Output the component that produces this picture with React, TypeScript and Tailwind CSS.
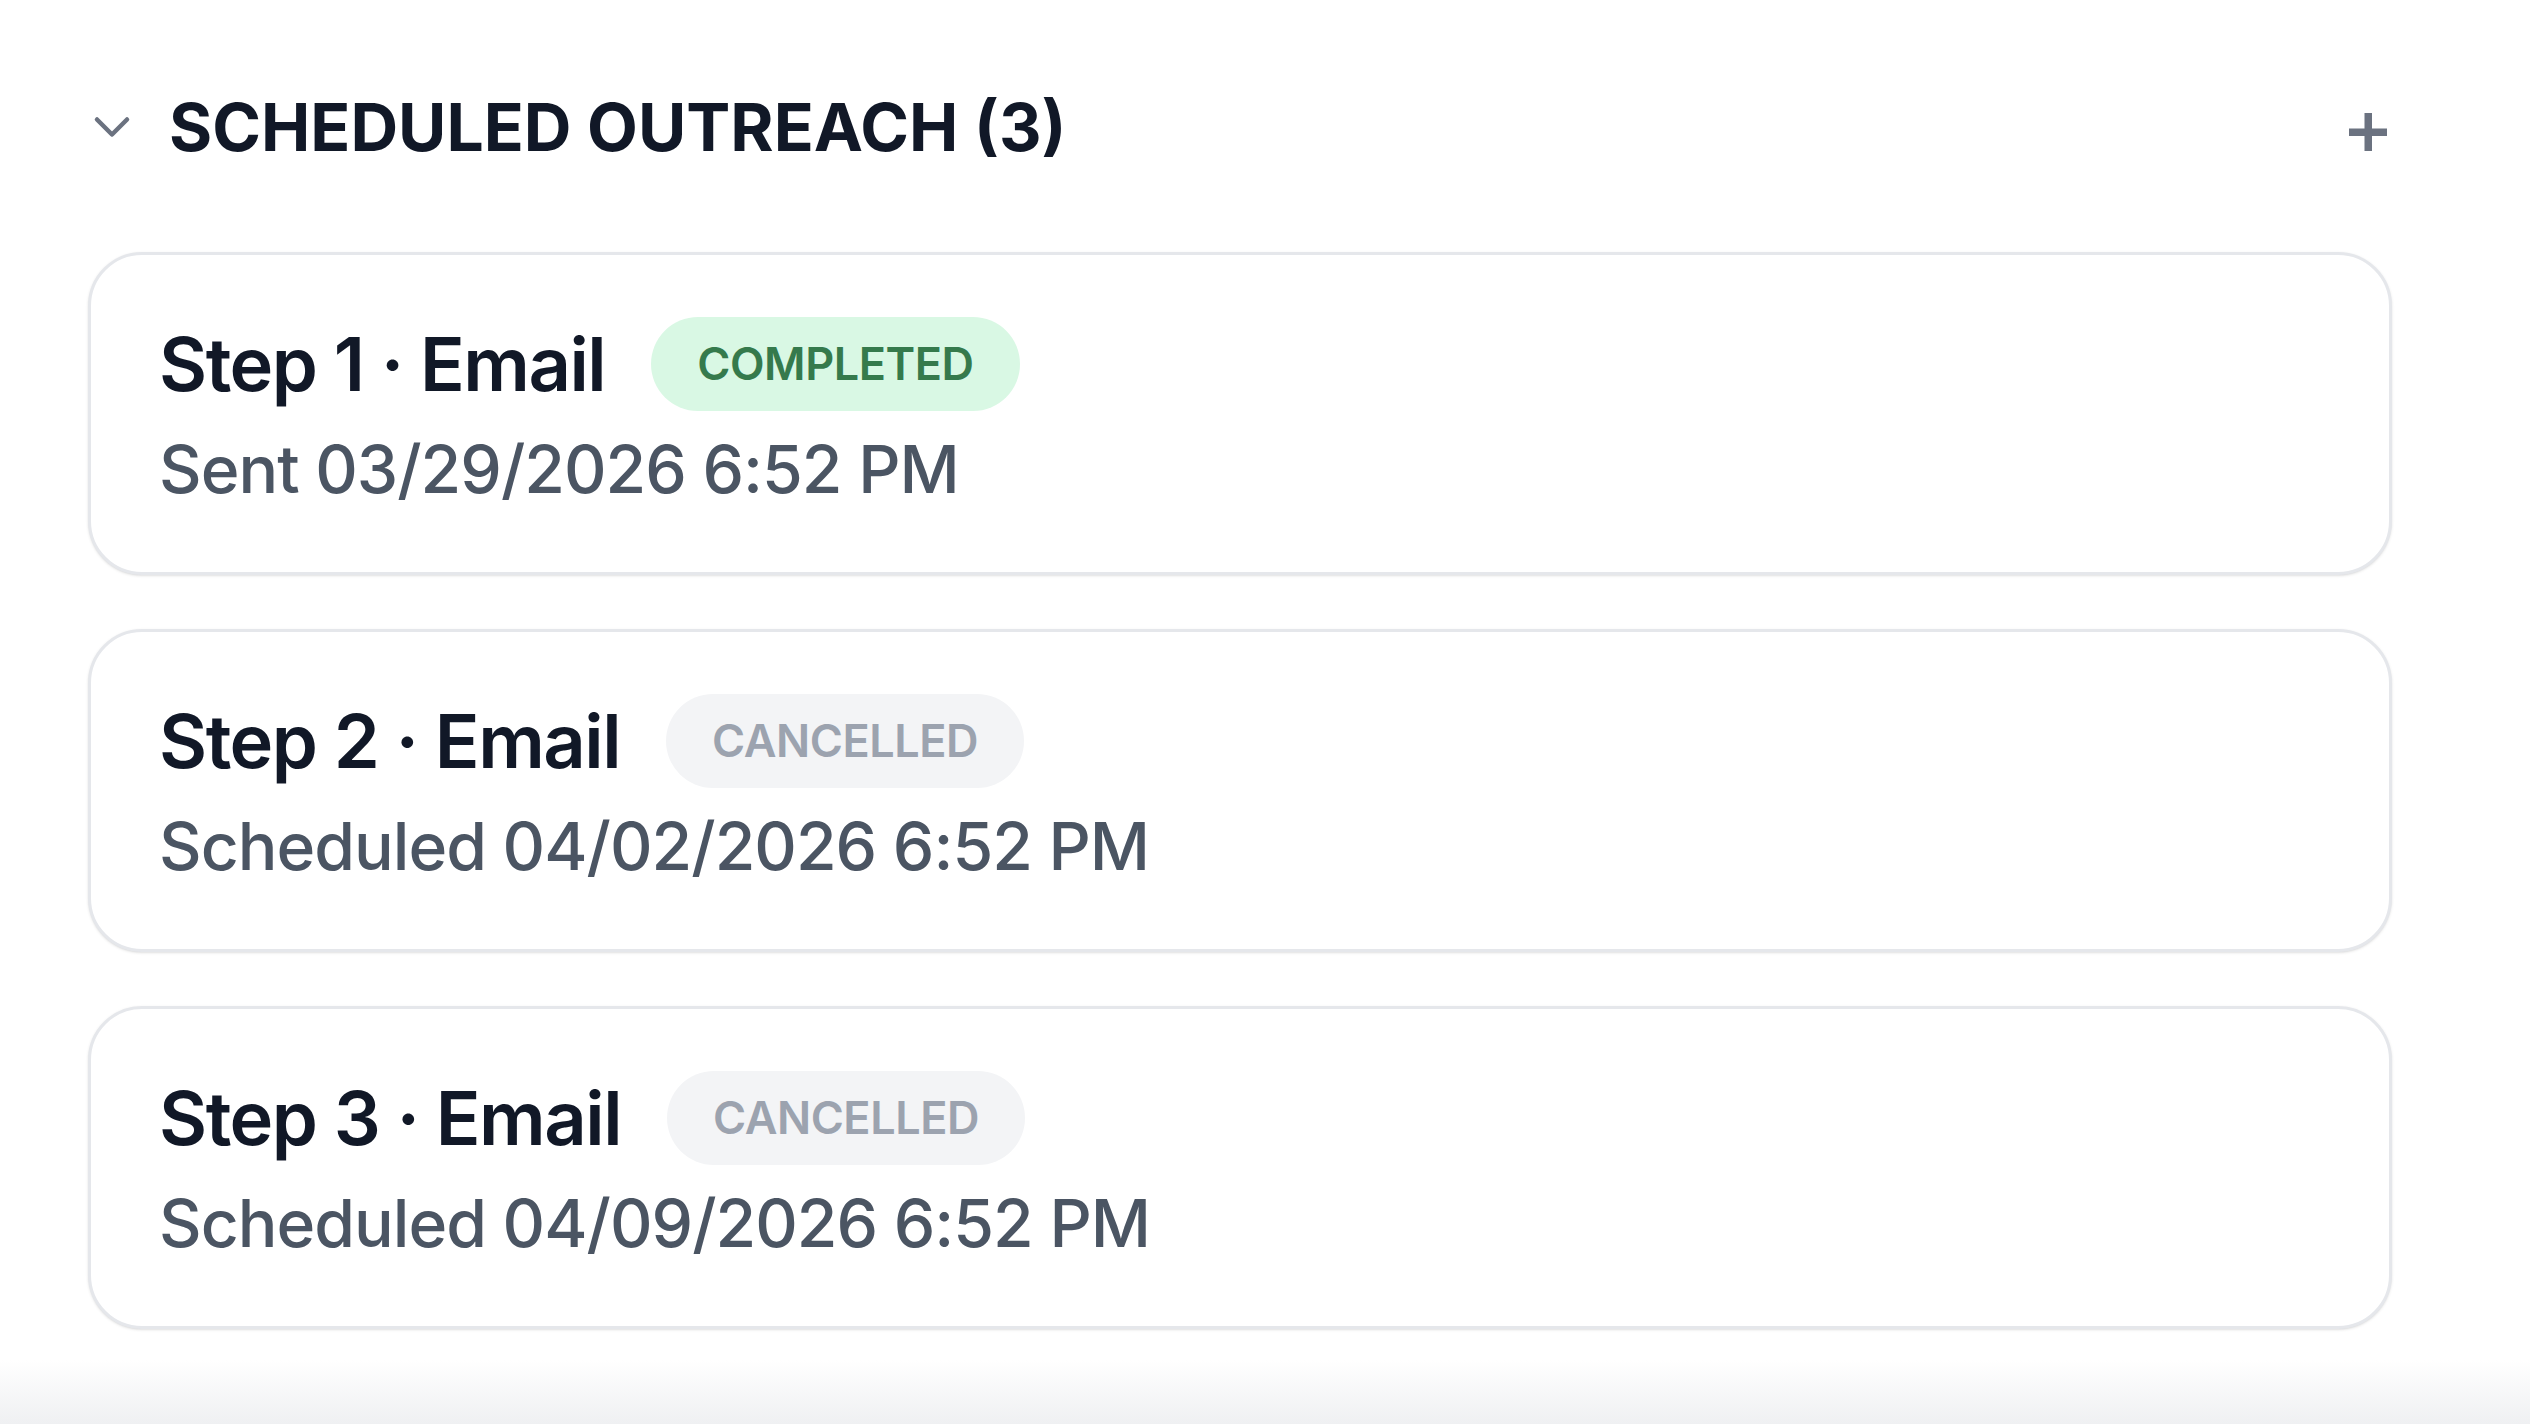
import React from "react";
import { ChevronDown } from "lucide-react";

type Step = { n: number; status: "COMPLETED" | "CANCELLED"; line: string };

const steps: Step[] = [
  { n: 1, status: "COMPLETED", line: "Sent 03/29/2026 6:52 PM" },
  { n: 2, status: "CANCELLED", line: "Scheduled 04/02/2026 6:52 PM" },
  { n: 3, status: "CANCELLED", line: "Scheduled 04/09/2026 6:52 PM" },
];

function Badge({ status }: { status: Step["status"] }) {
  if (status === "COMPLETED") {
    return (
      <span className="flex h-[94px] items-center rounded-full bg-[#d9f8e4] px-[46px] text-[45px] font-semibold tracking-[-0.01em] text-[#357a4c]">
        COMPLETED
      </span>
    );
  }
  return (
    <span className="flex h-[94px] items-center rounded-full bg-[#f3f4f6] px-[46px] text-[45px] font-semibold tracking-[-0.01em] text-[#9ca3af]">
      CANCELLED
    </span>
  );
}

export default function App() {
  return (
    <div className="flex min-h-screen flex-col bg-white font-['Inter',sans-serif]">
      <div className="pl-[88px] pr-[138px] pt-[77px]">
        <div className="flex h-[100px] items-center">
          <ChevronDown size={60} strokeWidth={1.8} className="-ml-[6px] text-[#6b7280]" />
          <h2 className="ml-[27px] text-[66px] font-bold text-[#111827]">
            SCHEDULED OUTREACH (3)
          </h2>
          <svg
            width="38"
            height="38"
            viewBox="0 0 38 38"
            className="ml-auto mr-[5px] mt-[10px]"
            fill="#6b7280"
          >
            <rect x="15.5" y="0" width="7.5" height="38" />
            <rect x="0" y="15.5" width="38" height="7.5" />
          </svg>
        </div>
        <div className="mt-[75px] flex flex-col gap-[54px]">
          {steps.map((s) => (
            <div
              key={s.n}
              className="h-[323px] rounded-[54px] border-[3px] border-[#e5e7eb] bg-white pl-[68px] pt-[62px] shadow-sm"
            >
              <div className="flex h-[94px] items-center gap-[46px]">
                <span className="text-[74px] font-semibold tracking-[-0.02em] text-[#111827]">
                  Step {s.n} · Email
                </span>
                <Badge status={s.status} />
              </div>
              <div className="mt-[9px] text-[66px] font-medium leading-[99px] tracking-[-0.015em] text-[#4b5563]">
                {s.line}
              </div>
            </div>
          ))}
        </div>
      </div>
      <div className="mt-auto h-[64px] bg-gradient-to-b from-white to-[#eff0f2]" />
    </div>
  );
}
